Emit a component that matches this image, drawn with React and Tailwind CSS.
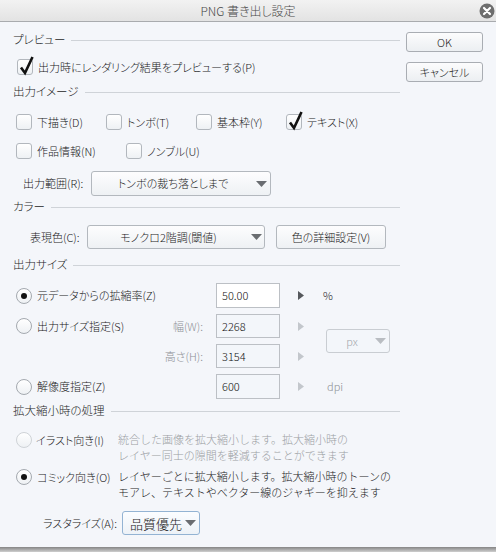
import React from 'react';

const font = "font-['Noto_Sans_CJK_JP','Liberation_Sans',sans-serif] [font-feature-settings:'palt'] font-light";

const Check = ({ checked }) => (
  <span className="relative w-[16px] h-[16px] shrink-0 rounded-[3px] border border-[#b2b7bd] bg-gradient-to-b from-white to-[#eef1f4]">
    {checked && (
      <svg className="absolute left-[1px] -top-[5px] overflow-visible" width="15" height="20" viewBox="0 0 15 20">
        <path d="M2 12.5 L6 18 L13.5 2" fill="none" stroke="#111" strokeWidth="2.6" />
      </svg>
    )}
  </span>
);

const Radio = ({ on, dim }) => (
  <span
    className={`flex items-center justify-center w-[16px] h-[16px] shrink-0 rounded-full border ${
      dim ? 'border-[#cfd3d7]' : 'border-[#a4a9af]'
    } bg-gradient-to-b from-white to-[#eef1f4]`}
  >
    {on && <span className="w-[6px] h-[6px] rounded-full bg-[#111]" />}
  </span>
);

const DownArrow = ({ dim }) => (
  <svg width="11" height="6" viewBox="0 0 11 6">
    <polygon points="0,0 11,0 5.5,6" fill={dim ? '#b9bdc2' : '#6a6d71'} />
  </svg>
);

const RightArrow = ({ dim }) => (
  <svg width="6" height="9" viewBox="0 0 6 9">
    <polygon points="0,0 6,4.5 0,9" fill={dim ? '#c3c7cc' : '#55585c'} />
  </svg>
);

const Heading = ({ children, className = '' }) => (
  <div className={`flex items-center gap-[6px] h-[14px] ${className}`}>
    <span className="text-[11.5px] leading-none text-[#1e1e1e] whitespace-nowrap">{children}</span>
    <span className="flex-1 h-px bg-[#cfd3d8]" />
  </div>
);

const CheckItem = ({ label, checked, w }) => (
  <div className={`flex items-center gap-[5px] ${w}`}>
    <Check checked={checked} />
    <span className="whitespace-nowrap">{label}</span>
  </div>
);

const Field = ({ value, dim }) => (
  <div
    className={`flex items-center h-full w-[64px] pl-[5px] border border-[#bcc0c5] text-[11px] text-[#111] ${
      dim ? 'bg-[#f3f6fa]' : 'bg-white'
    }`}
  >
    {value}
  </div>
);

export default function App() {
  return (
    <div className={`w-[496px] h-[552px] flex flex-col bg-[#f4f6fa] text-[11px] leading-none text-[#1a1a1a] ${font}`}>
      {/* title bar */}
      <div className="relative flex items-center justify-center h-[22px] shrink-0 border-b border-[#a9abae] bg-gradient-to-b from-[#f2f2f2] to-[#e3e3e3]">
        <span className="text-[12px] text-[#4a4a4a]">PNG 書き出し設定</span>
        <svg className="absolute right-[1px] top-[3px]" width="16" height="16" viewBox="0 0 16 16">
          <circle cx="8" cy="8" r="7.5" fill="#6e6e6e" />
          <path d="M5 5 L11 11 M11 5 L5 11" stroke="#fff" strokeWidth="2.2" strokeLinecap="round" />
        </svg>
      </div>

      <div className="flex flex-1">
        {/* left column */}
        <div className="flex flex-col w-[400px] pl-[13px]">
          <Heading className="mt-[11px]">プレビュー</Heading>
          <div className="flex items-center gap-[5px] h-[16px] mt-[12px] pl-[4px]">
            <Check checked />
            <span className="whitespace-nowrap">出力時にレンダリング結果をプレビューする(P)</span>
          </div>

          <Heading className="mt-[10px]">出力イメージ</Heading>
          <div className="flex items-center h-[16px] mt-[15px] pl-[3px]">
            <CheckItem label="下描き(D)" w="w-[90px]" />
            <CheckItem label="トンボ(T)" w="w-[90px]" />
            <CheckItem label="基本枠(Y)" w="w-[90px]" />
            <CheckItem label="テキスト(X)" checked w="w-[90px]" />
          </div>
          <div className="flex items-center h-[16px] mt-[13px] pl-[3px]">
            <CheckItem label="作品情報(N)" w="w-[110px]" />
            <CheckItem label="ノンブル(U)" w="w-[90px]" />
          </div>
          <div className="flex items-center h-[25px] mt-[12px] pl-[10px]">
            <span className="w-[68px] whitespace-nowrap">出力範囲(R):</span>
            <div className="flex items-center h-full w-[180px] rounded-[3px] border border-[#b3b8be] bg-gradient-to-b from-[#fdfdfe] to-[#eef1f4]">
              <span className="flex-1 text-center">トンボの裁ち落としまで</span>
              <span className="pr-[3px] pl-[2px] flex"><DownArrow /></span>
            </div>
          </div>

          <Heading className="mt-[4px]">カラー</Heading>
          <div className="flex items-center h-[24px] mt-[11px] pl-[17px]">
            <span className="w-[57px] whitespace-nowrap">表現色(C):</span>
            <div className="flex items-center h-full w-[178px] rounded-[3px] border border-[#b3b8be] bg-gradient-to-b from-[#fdfdfe] to-[#eef1f4]">
              <span className="flex-1 text-center">モノクロ2階調(閾値)</span>
              <span className="pr-[2px] pl-[2px] flex"><DownArrow /></span>
            </div>
            <div className="flex items-center justify-center h-full w-[110px] ml-[11px] rounded-[3px] border border-[#b3b8be] bg-gradient-to-b from-[#fdfdfe] to-[#eef1f4]">
              色の詳細設定(V)
            </div>
          </div>

          <Heading className="mt-[9px]">出力サイズ</Heading>
          <div className="grid grid-cols-[200px_64px_24px_auto] grid-rows-[25px_24px_24px_25px] gap-y-[6px] mt-[11px] pl-[3px]">
            <div className="flex items-center gap-[5px]">
              <Radio on />
              <span className="whitespace-nowrap">元データからの拡縮率(Z)</span>
            </div>
            <Field value="50.00" />
            <div className="flex items-center justify-end"><RightArrow /></div>
            <div className="flex items-center pl-[19px]">%</div>

            <div className="flex items-center gap-[5px] pr-[13px]">
              <Radio />
              <span className="whitespace-nowrap">出力サイズ指定(S)</span>
              <span className="ml-auto text-[#8d9095] whitespace-nowrap">幅(W):</span>
            </div>
            <Field value="2268" dim />
            <div className="flex items-center justify-end"><RightArrow dim /></div>
            <div className="row-span-2 flex items-center pl-[22px]">
              <div className="flex items-center h-[24px] w-[64px] rounded-[3px] border border-[#c9cdd2] bg-[#f3f6fa]">
                <span className="flex-1 text-center text-[#a3a7ac] pl-[2px]">px</span>
                <span className="pr-[3px] flex"><DownArrow dim /></span>
              </div>
            </div>

            <div className="flex items-center justify-end pr-[13px]">
              <span className="text-[#8d9095] whitespace-nowrap">高さ(H):</span>
            </div>
            <Field value="3154" dim />
            <div className="flex items-center justify-end"><RightArrow dim /></div>

            <div className="flex items-center gap-[5px]">
              <Radio />
              <span className="whitespace-nowrap">解像度指定(Z)</span>
            </div>
            <Field value="600" dim />
            <div className="flex items-center justify-end"><RightArrow dim /></div>
            <div className="flex items-center pl-[23px] text-[#8d9095]">dpi</div>
          </div>

          <Heading className="mt-[5px]">拡大縮小時の処理</Heading>
          <div className="flex mt-[14px] pl-[3px]">
            <div className="flex items-center gap-[4px] w-[102px] h-[16px]">
              <Radio dim />
              <span className="whitespace-nowrap">イラスト向き(I)</span>
            </div>
            <div className="flex flex-col text-[#9b9ea3] leading-[16px] -mt-px [font-feature-settings:normal]">
              <span className="whitespace-nowrap">統合した画像を拡大縮小します。拡大縮小時の</span>
              <span className="whitespace-nowrap">レイヤー同士の隙間を軽減することができます</span>
            </div>
          </div>
          <div className="flex mt-[6px] pl-[3px]">
            <div className="flex items-center gap-[5px] w-[102px] h-[16px]">
              <Radio on />
              <span className="whitespace-nowrap">コミック向き(O)</span>
            </div>
            <div className="flex flex-col leading-[16px] -mt-px [font-feature-settings:normal]">
              <span className="whitespace-nowrap">レイヤーごとに拡大縮小します。拡大縮小時のトーンの</span>
              <span className="whitespace-nowrap">モアレ、テキストやベクター線のジャギーを抑えます</span>
            </div>
          </div>
          <div className="flex items-center h-[24px] mt-[11px] pl-[30px]">
            <span className="w-[79px] whitespace-nowrap">ラスタライズ(A):</span>
            <div className="flex items-center h-full w-[78px] rounded-[3px] border border-[#93b3d3] bg-gradient-to-b from-[#fbfdff] to-[#edf2f7]">
              <span className="flex-1 pl-[7px] text-[13px]">品質優先</span>
              <span className="pr-[3px] flex"><DownArrow /></span>
            </div>
          </div>
        </div>

        {/* right column */}
        <div className="flex flex-col pl-[6px]">
          <div className="flex items-center justify-center w-[77px] h-[20px] mt-[10px] rounded-[3px] border border-[#a9adb3] bg-gradient-to-b from-[#fcfcfd] to-[#eceff2]">
            OK
          </div>
          <div className="flex items-center justify-center w-[77px] h-[20px] mt-[10px] rounded-[3px] border border-[#a9adb3] bg-gradient-to-b from-[#fcfcfd] to-[#eceff2]">
            キャンセル
          </div>
        </div>
      </div>

      <div className="h-[5px] shrink-0 bg-gradient-to-b from-[#858585] to-[#cfcfcf]" />
    </div>
  );
}
